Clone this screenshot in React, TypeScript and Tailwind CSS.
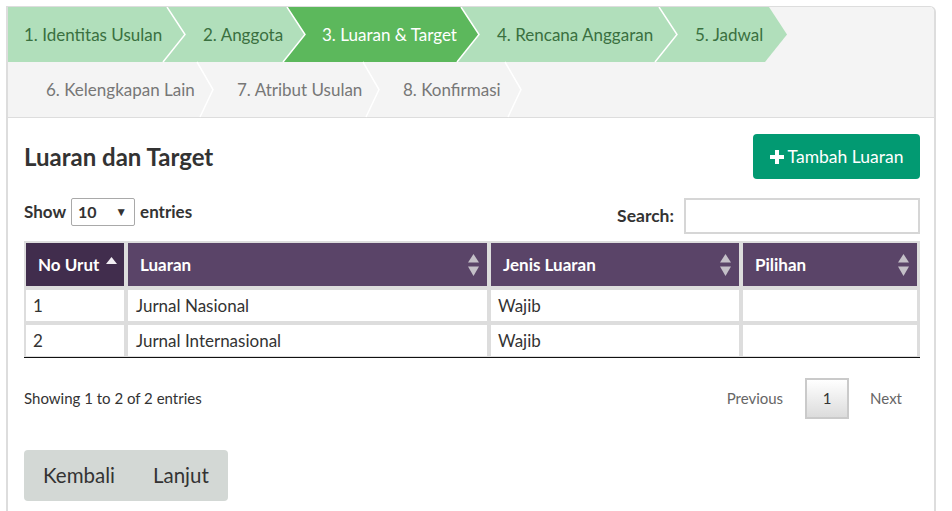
import React from 'react';

type Step = {
  label: string;
  w: string;
  pl: string;
  fill: string;
  bg: string;
  text: string;
  stroke: boolean;
};

const rowOne: Step[] = [
  { label: '1. Identitas Usulan', w: 'w-[155px]', pl: 'pl-4', fill: '#b1dfbb', bg: 'bg-[#b1dfbb]', text: 'text-[#3a7040]', stroke: true },
  { label: '2. Anggota', w: 'w-[120px]', pl: 'pl-[40px]', fill: '#b1dfbb', bg: 'bg-[#b1dfbb]', text: 'text-[#3a7040]', stroke: true },
  { label: '3. Luaran & Target', w: 'w-[174px]', pl: 'pl-[39px]', fill: '#5cb85c', bg: 'bg-[#5cb85c]', text: 'text-white', stroke: true },
  { label: '4. Rencana Anggaran', w: 'w-[198px]', pl: 'pl-[40px]', fill: '#b1dfbb', bg: 'bg-[#b1dfbb]', text: 'text-[#3a7040]', stroke: true },
  { label: '5. Jadwal', w: 'w-[110px]', pl: 'pl-[40px]', fill: '#b1dfbb', bg: 'bg-[#b1dfbb]', text: 'text-[#3a7040]', stroke: false },
];

const rowTwo = [
  { label: '6. Kelengkapan Lain', w: 'w-[189px]' },
  { label: '7. Atribut Usulan', w: 'w-[166px]' },
  { label: '8. Konfirmasi', w: 'w-[142px]' },
];

// chevron drawn over the start of the next step
function Arrow({ fill, stroke, top, tip, bot }: { fill: string; stroke: boolean; top: number; tip: number; bot: number }) {
  return (
    <svg
      className="absolute left-full top-0 z-10 h-[55px] w-[24px] overflow-visible"
      viewBox="0 0 24 55"
    >
      <polygon points={`0,0 ${top},0 ${tip},27.5 ${bot},55 0,55`} fill={fill} />
      {stroke && (
        <polyline points={`${top},0 ${tip},27.5 ${bot},55`} fill="none" stroke="#fff" strokeWidth="1.5" />
      )}
    </svg>
  );
}

function SortBoth() {
  return (
    <svg className="h-[22px] w-[11px]" viewBox="0 0 11 22">
      <path d="M5.5 0 L11 8.5 H0 Z" fill="#c4c0c8" />
      <path d="M0 12.5 H11 L5.5 22 Z" fill="#c4c0c8" />
    </svg>
  );
}

function SortAsc() {
  return (
    <svg className="h-[7px] w-[11px] -mt-[8px]" viewBox="0 0 11 7">
      <path d="M5.5 0 L11 7 H0 Z" fill="#f2eef4" />
    </svg>
  );
}

function PlusIcon() {
  return (
    <svg className="h-[14px] w-[14px]" viewBox="0 0 14 14">
      <rect x="5" y="0" width="4" height="14" fill="#fff" />
      <rect x="0" y="5" width="14" height="4" fill="#fff" />
    </svg>
  );
}

const rows = [
  { no: '1', luaran: 'Jurnal Nasional', jenis: 'Wajib' },
  { no: '2', luaran: 'Jurnal Internasional', jenis: 'Wajib' },
];

export default function App() {
  return (
    <div className="min-h-[511px] bg-white pt-[6px] pl-[6px] font-['Lato',sans-serif] text-[#333]">
      <div className="w-[930px] overflow-hidden rounded-tr-[6px] border-x-2 border-t border-[#ddd] bg-white">
        {/* Wizard steps */}
        <div className="border-b border-[#ddd] bg-[#f4f4f4]">
          <div className="flex h-[55px]">
            {rowOne.map((s) => (
              <div key={s.label} className={`relative flex items-center ${s.w} ${s.pl} ${s.bg} ${s.text} text-[17px] whitespace-nowrap`}>
                {s.label}
                <Arrow fill={s.fill} stroke={s.stroke} top={4} tip={22} bot={0} />
              </div>
            ))}
          </div>
          <div className="flex h-[55px]">
            {rowTwo.map((s, i) => (
              <div key={s.label} className={`relative flex items-center ${s.w} ${i === 0 ? 'pl-[38px]' : 'pl-[40px]'} text-[17px] whitespace-nowrap text-[#777]`}>
                {s.label}
                <Arrow fill="#f4f4f4" stroke top={0} tip={16} bot={3} />
              </div>
            ))}
          </div>
        </div>

        {/* Content */}
        <div className="pl-4 pr-[14px] pt-4 pb-[10px]">
          <div className="flex items-center justify-between">
            <h2 className="text-[24px] font-bold text-[#333]">Luaran dan Target</h2>
            <button className="flex h-[45px] w-[167px] items-center justify-center gap-[4px] rounded-[4px] bg-[#029a72] pt-[1px] text-[17.5px] text-white">
              <PlusIcon />
              Tambah Luaran
            </button>
          </div>

          <div className="mt-[19px] flex items-start justify-between">
            <div className="flex h-[28px] items-center gap-[5px] text-[17px] font-bold">
              <span>Show</span>
              <div className="flex h-[28px] w-[64px] items-center justify-between rounded-[2px] border border-[#a9a9a9] pl-[6px] pr-[7px]">
                <span className="text-[16px]">10</span>
                <span className="text-[12px]">▼</span>
              </div>
              <span>entries</span>
            </div>
            <div className="flex items-center gap-[10px]">
              <span className="text-[17.5px] font-bold">Search:</span>
              <input className="h-[36px] w-[236px] border-2 border-[#d6d6d6] bg-white outline-none" />
            </div>
          </div>

          {/* Table */}
          <div className="mt-[7px] border-b border-[#111]">
            <div className="grid grid-cols-[98px_359px_248px_174px] gap-1 bg-[#ddd] p-[2px] pb-[1px] text-[17px]">
              <div className="flex h-[43px] items-center justify-between bg-[#412d4d] pl-3 pr-[7px] font-bold text-white">
                <span>No Urut</span>
                <SortAsc />
              </div>
              {['Luaran', 'Jenis Luaran', 'Pilihan'].map((h) => (
                <div key={h} className="flex h-[43px] items-center justify-between bg-[#5a4468] pl-3 pr-[8px] font-bold text-white">
                  <span>{h}</span>
                  <SortBoth />
                </div>
              ))}
              {rows.map((r) => (
                <React.Fragment key={r.no}>
                  <div className="flex h-[31px] items-center bg-white pl-[7px]">{r.no}</div>
                  <div className="flex h-[31px] items-center bg-white pl-2">{r.luaran}</div>
                  <div className="flex h-[31px] items-center bg-white pl-[7px]">{r.jenis}</div>
                  <div className="h-[31px] bg-white" />
                </React.Fragment>
              ))}
            </div>
          </div>

          <div className="mt-[20px] flex items-center justify-between">
            <span className="text-[15px]">Showing 1 to 2 of 2 entries</span>
            <div className="flex items-center gap-[2px] text-[15px] text-[#666]">
              <span className="px-[20px]">Previous</span>
              <span className="flex h-[41px] w-[44px] items-center justify-center border-2 border-[#cacaca] bg-gradient-to-b from-white to-[#dcdcdc] text-[15px] text-[#333]">
                1
              </span>
              <span className="pl-[19px] pr-[18px]">Next</span>
            </div>
          </div>

          <div className="mt-[31px] flex w-fit rounded-[4px] bg-[#d3d8d5] text-[20.5px] text-[#333]">
            <button className="h-[51px] px-[19px]">Kembali</button>
            <button className="h-[51px] px-[19px]">Lanjut</button>
          </div>
        </div>
      </div>
    </div>
  );
}
